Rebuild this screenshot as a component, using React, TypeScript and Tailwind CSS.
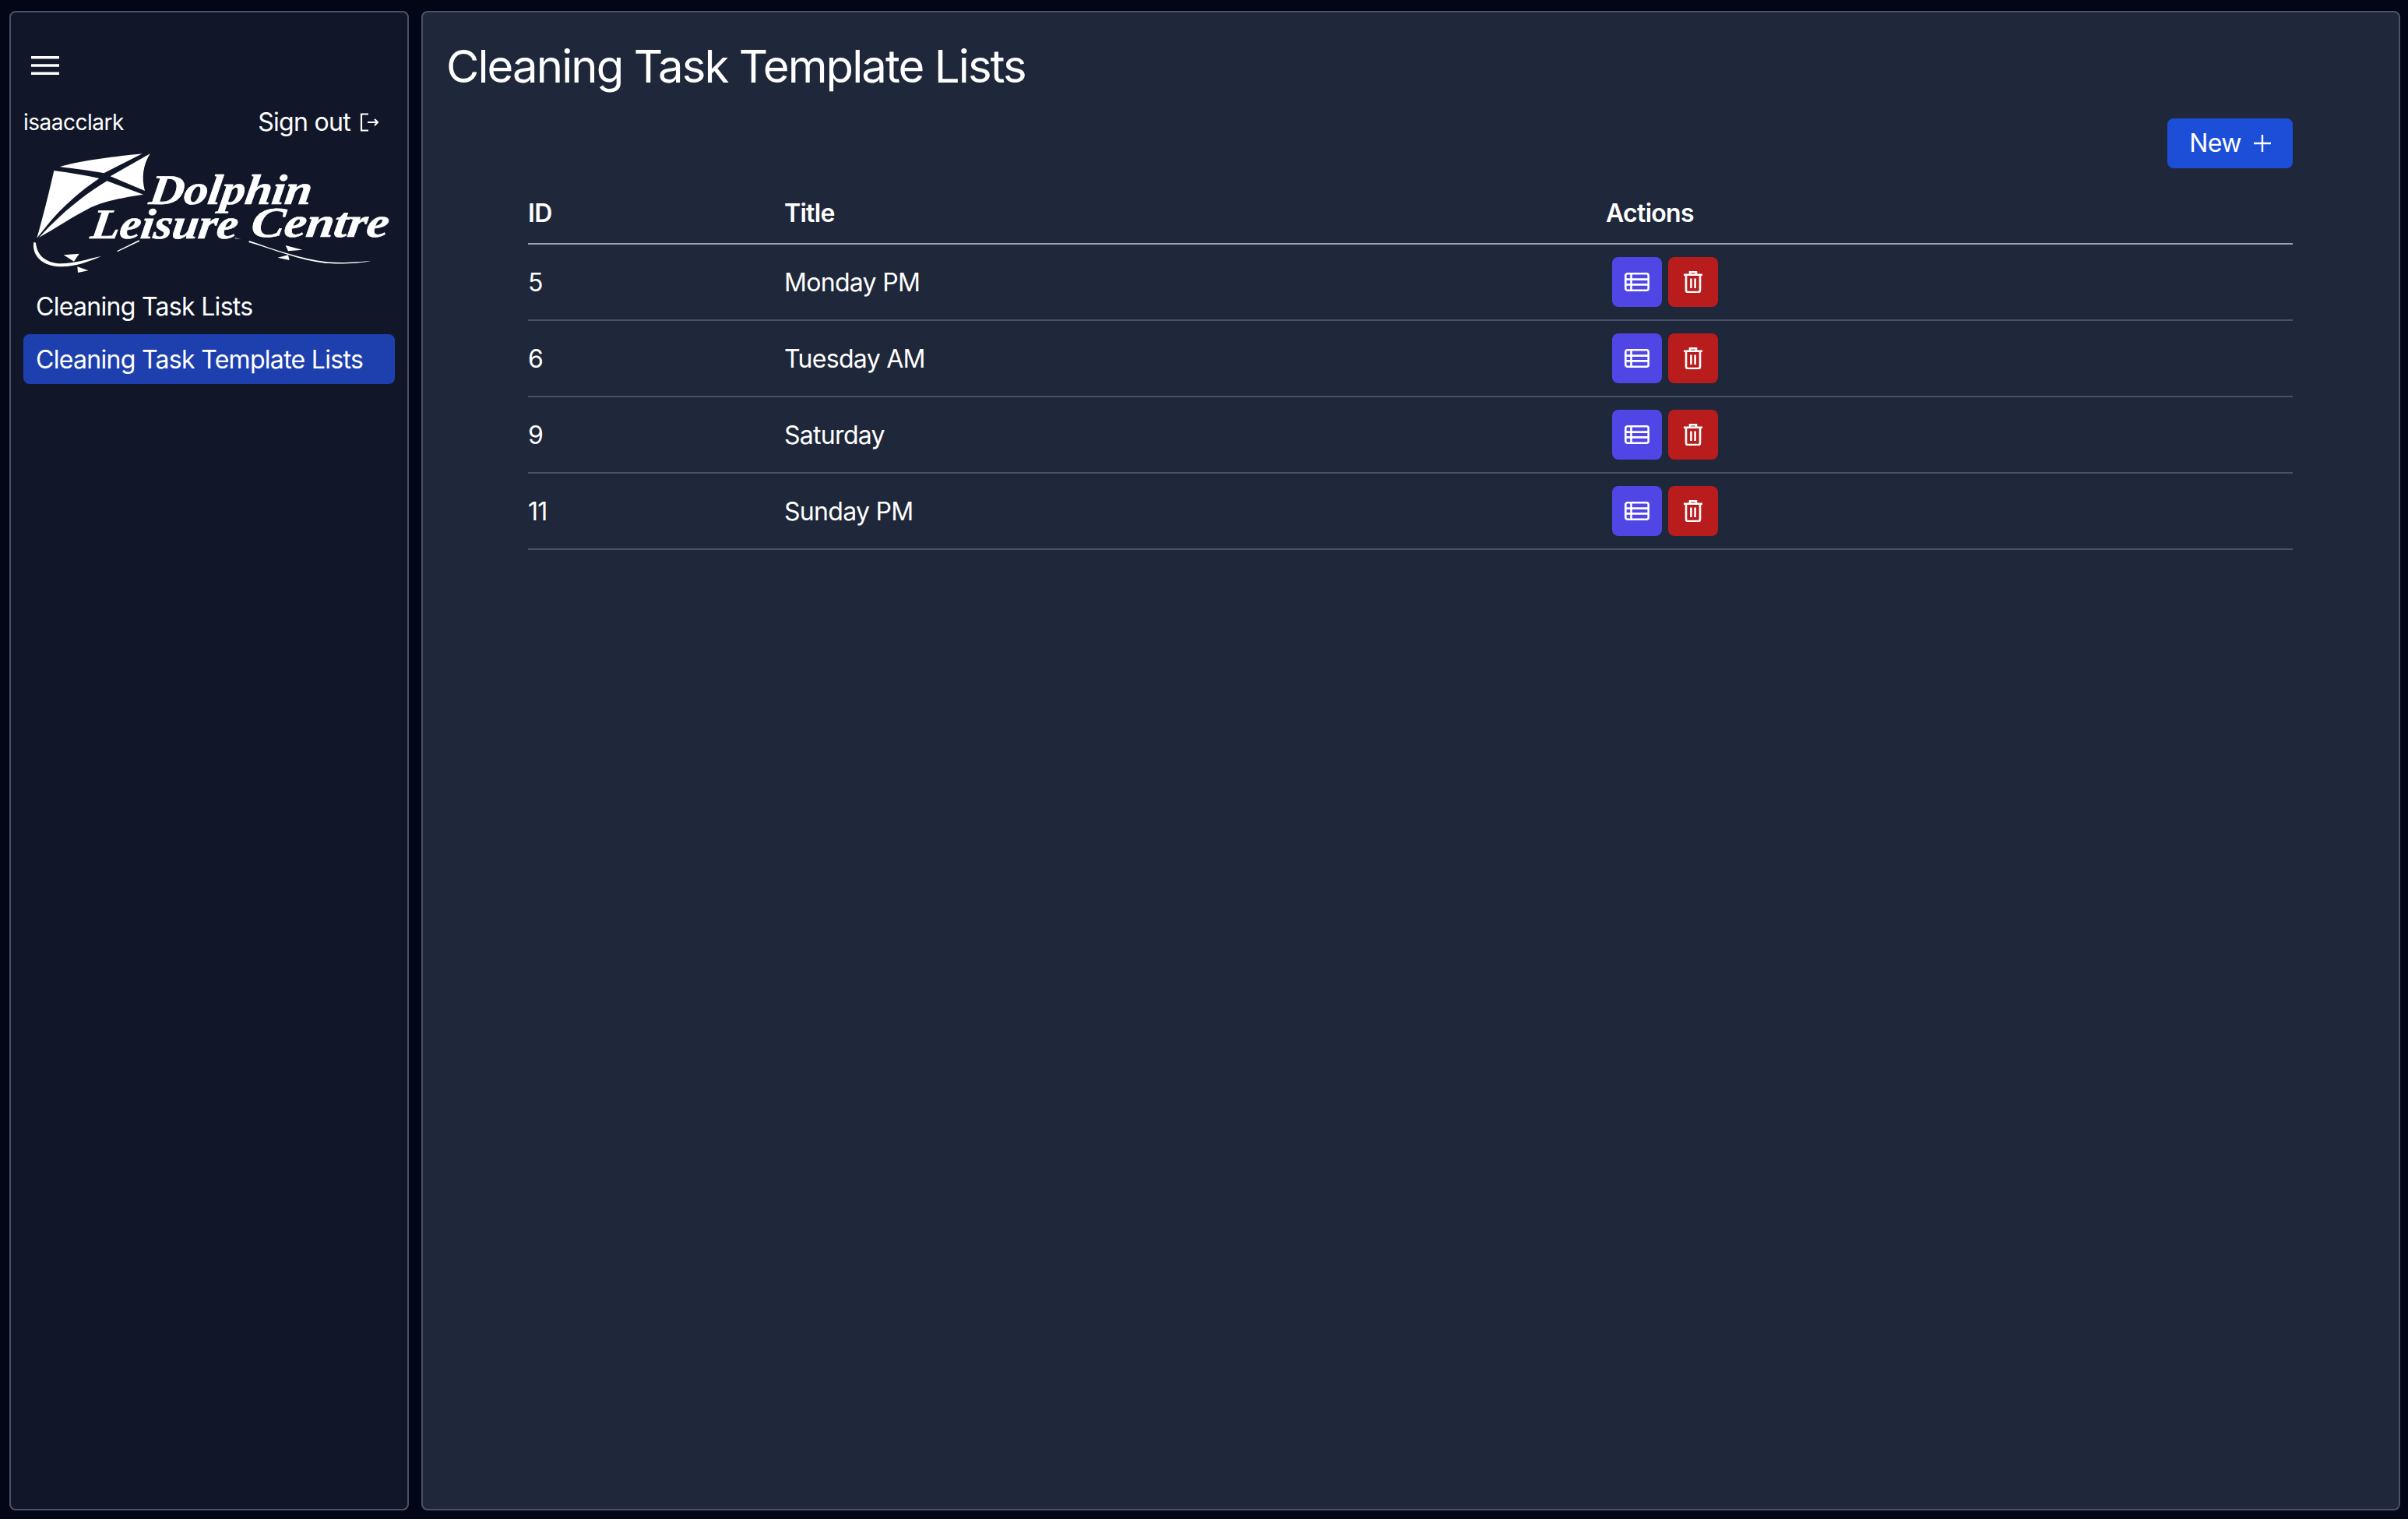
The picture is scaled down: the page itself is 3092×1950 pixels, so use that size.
const rows = [
  { id: "5", title: "Monday PM" },
  { id: "6", title: "Tuesday AM" },
  { id: "9", title: "Saturday" },
  { id: "11", title: "Sunday PM" },
];

function Logo() {
  return (
    <svg viewBox="0 0 1500 570" className="block w-[500px] h-[190px]" fill="#ffffff">
      <path d="M170,105 C260,80 390,65 488,55 L340,130 C290,120 220,112 170,105Z" />
      <path d="M518,55 C490,100 485,150 498,198 L365,142 Z" />
      <path d="M148,120 C205,128 270,138 322,150 C240,205 170,270 118,335 L82,380 C105,300 130,200 148,120Z" />
      <path d="M352,160 L492,212 C400,225 340,240 290,262 C220,298 150,345 90,378 C170,290 260,215 352,160Z" />
      <path d="M70,395 C62,445 100,490 180,490 C230,490 290,468 330,450 C280,460 225,478 175,478 C115,476 82,445 78,398Z" />
      <path d="M185,445 L245,440 L225,470Z M238,490 L280,505 L240,513Z" />
      <path d="M390,430 L475,388 L478,392 L394,432Z M845,378 L868,385 L845,381Z" />
      <path d="M900,390 C1000,425 1100,460 1200,472 C1260,476 1330,472 1370,467 C1330,478 1250,480 1195,477 C1090,465 1000,425 898,396Z" />
      <path d="M1040,408 L1105,425 L1050,430Z M1010,455 L1050,445 L1055,465Z" />
      <g fontFamily="'Liberation Serif', serif" fontWeight="700" fontStyle="italic" fontSize="164" stroke="#ffffff" strokeWidth="2">
        <text transform="translate(510 250) skewX(-8)" textLength="625" lengthAdjust="spacingAndGlyphs">Dolphin</text>
        <text transform="translate(285 380) skewX(-8)" textLength="565" lengthAdjust="spacingAndGlyphs">Leisure</text>
        <text transform="translate(902 376) skewX(-8)" textLength="530" lengthAdjust="spacingAndGlyphs">Centre</text>
      </g>
    </svg>
  );
}

function TableIcon() {
  return (
    <svg viewBox="0 0 32 24" className="w-[32px] h-[24px]" fill="none" stroke="#ffffff" strokeWidth="2.6">
      <rect x="1.3" y="1.3" width="29.4" height="21.4" rx="2.5" />
      <path d="M1.3 8.6H30.7M1.3 15.4H30.7M8.5 1.3V22.7" />
    </svg>
  );
}

function TrashIcon() {
  return (
    <svg viewBox="0 0 24 28" className="w-[24px] h-[28px]" fill="none" stroke="#ffffff" strokeWidth="2.6">
      <path d="M0 4.8H24M8 4.5V1.3H16V4.5" />
      <path d="M3 5V24.5C3 25.9 4.1 27 5.5 27H18.5C19.9 27 21 25.9 21 24.5V5" />
      <path d="M9.4 9.5V22M14.6 9.5V22" />
    </svg>
  );
}

export default function App() {
  return (
    <div className="h-[1950px] bg-[#030616] pt-[14px] pb-[11px] pl-[12px] pr-[10px] flex gap-[16px] text-white font-['Inter',sans-serif] tracking-[-0.7px]">
      <aside className="w-[513px] shrink-0 bg-[#111729] border-2 border-[#4a5268] rounded-[8px] px-[16px]">
        <button className="block mt-[56px] ml-[10px]">
          <svg viewBox="0 0 36 24" className="block w-[36px] h-[24px]" fill="none" stroke="#ffffff" strokeWidth="3.4">
            <path d="M0 1.7H36M0 12H36M0 22.3H36" />
          </svg>
        </button>
        <div className="mt-[41px] flex items-center justify-between pr-[21px] h-[40px]">
          <span className="text-[28px] tracking-[-0.5px]">isaacclark</span>
          <span className="flex items-center gap-[12px] text-[32px]">
            Sign out
            <svg viewBox="0 0 24 24" className="w-[24px] h-[24px]" fill="none" stroke="#ffffff" strokeWidth="2.2">
              <path d="M11 1.5H2V22.5H11M10 12H23M19 8L23 12L19 16" />
            </svg>
          </span>
        </div>
        <div className="-ml-[10px] mt-[2px] h-[190px]">
          <Logo />
        </div>
        <nav className="-mt-[8px] flex flex-col gap-[4px]">
          <a className="block px-[16px] h-[64px] leading-[66px] text-[32px] rounded-[8px]">Cleaning Task Lists</a>
          <a className="block px-[16px] h-[64px] leading-[66px] text-[32px] rounded-[8px] bg-[#1e40af]">Cleaning Task Template Lists</a>
        </nav>
      </aside>
      <main className="flex-1 min-w-0 bg-[#1f273a] border-2 border-[#4a5268] rounded-[8px] pl-[30px] pr-[136px]">
        <h1 className="text-[58px] leading-[72px] mt-[33px] font-normal tracking-[-1.9px]">Cleaning Task Template Lists</h1>
        <div className="flex justify-end mt-[31px]">
          <button className="flex items-center gap-[16px] h-[64px] w-[161px] justify-center bg-[#1d4ed8] rounded-[8px] text-[32px]">
            New
            <svg viewBox="0 0 22 22" className="w-[22px] h-[22px]" fill="none" stroke="#ffffff" strokeWidth="2.4">
              <path d="M11 0V22M0 11H22" />
            </svg>
          </button>
        </div>
        <table className="ml-[105px] w-[2266px] border-collapse table-fixed text-[32px]">
          <thead>
            <tr className="border-b-2 border-[#94a3b8] text-left">
              <th className="w-[329px] font-semibold pt-[38px] pb-[18px] leading-[40px]">ID</th>
              <th className="w-[1055px] font-semibold pt-[38px] pb-[18px] leading-[40px]">Title</th>
              <th className="font-semibold pt-[38px] pb-[18px] leading-[40px]">Actions</th>
            </tr>
          </thead>
          <tbody>
            {rows.map((r) => (
              <tr key={r.id} className="h-[98px] border-b-2 border-[#4a5268]">
                <td className="pt-[2px]">{r.id}</td>
                <td className="pt-[2px]">{r.title}</td>
                <td className="pl-[8px]">
                  <div className="flex gap-[8px]">
                    <button className="w-[64px] h-[64px] rounded-[8px] bg-[#4f46e5] flex items-center justify-center"><TableIcon /></button>
                    <button className="w-[64px] h-[64px] rounded-[8px] bg-[#b91c1c] flex items-center justify-center"><TrashIcon /></button>
                  </div>
                </td>
              </tr>
            ))}
          </tbody>
        </table>
      </main>
    </div>
  );
}
